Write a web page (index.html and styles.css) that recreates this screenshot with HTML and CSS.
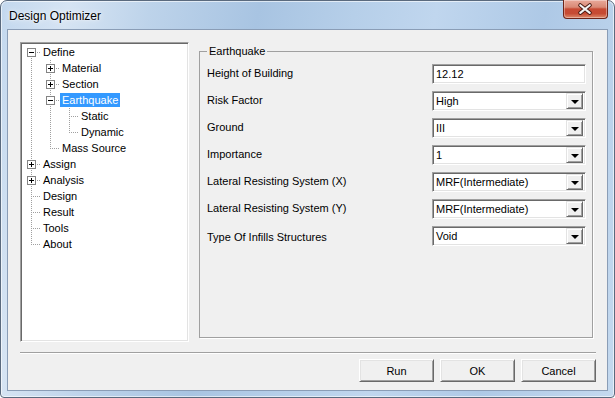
FILE: index.html
```html
<!DOCTYPE html>
<html lang="en">
<head>
  <meta charset="UTF-8">
  <title>Design Optimizer</title>
  <link rel="stylesheet" href="styles.css">
</head>
<body>

<div class="window">
  <div class="titlebar">
    <span class="title">Design Optimizer</span>
    <button class="close" aria-label="Close">
      <svg width="45" height="19" viewBox="0 0 45 19">
        <path d="M17 5 L27 13 M27 5 L17 13" stroke="#4a1a12" stroke-width="4.2" stroke-linecap="round"/>
        <path d="M17 5 L27 13 M27 5 L17 13" stroke="#f4f4f4" stroke-width="2.2" stroke-linecap="round"/>
      </svg>
    </button>
  </div>

  <div class="client">
    <div class="main">
      <div class="tree">
        <div class="node"><span class="cell first"><span class="exp minus"></span></span><span class="label">Define</span></div>
        <div class="node"><span class="cell pipe"></span><span class="cell tee"><span class="exp plus"></span></span><span class="label">Material</span></div>
        <div class="node"><span class="cell pipe"></span><span class="cell tee"><span class="exp plus"></span></span><span class="label">Section</span></div>
        <div class="node"><span class="cell pipe"></span><span class="cell tee"><span class="exp minus"></span></span><span class="label selected">Earthquake</span></div>
        <div class="node"><span class="cell pipe"></span><span class="cell pipe"></span><span class="cell tee"></span><span class="label">Static</span></div>
        <div class="node"><span class="cell pipe"></span><span class="cell pipe"></span><span class="cell end"></span><span class="label">Dynamic</span></div>
        <div class="node"><span class="cell pipe"></span><span class="cell end"></span><span class="label">Mass Source</span></div>
        <div class="node"><span class="cell tee"><span class="exp plus"></span></span><span class="label">Assign</span></div>
        <div class="node"><span class="cell tee"><span class="exp plus"></span></span><span class="label">Analysis</span></div>
        <div class="node"><span class="cell tee"></span><span class="label">Design</span></div>
        <div class="node"><span class="cell tee"></span><span class="label">Result</span></div>
        <div class="node"><span class="cell tee"></span><span class="label">Tools</span></div>
        <div class="node"><span class="cell end"></span><span class="label">About</span></div>
      </div>

      <fieldset class="group">
        <legend>Earthquake</legend>
        <div class="form">
          <label>Height of Building</label>
          <div class="textbox">12.12</div>

          <label>Risk Factor</label>
          <div class="combo"><span class="value">High</span><span class="drop"></span></div>

          <label>Ground</label>
          <div class="combo"><span class="value">III</span><span class="drop"></span></div>

          <label>Importance</label>
          <div class="combo"><span class="value">1</span><span class="drop"></span></div>

          <label>Lateral Resisting System (X)</label>
          <div class="combo"><span class="value">MRF(Intermediate)</span><span class="drop"></span></div>

          <label>Lateral Resisting System (Y)</label>
          <div class="combo"><span class="value">MRF(Intermediate)</span><span class="drop"></span></div>

          <label class="lower">Type Of Infills Structures</label>
          <div class="combo"><span class="value">Void</span><span class="drop"></span></div>
        </div>
      </fieldset>
    </div>

    <div class="separator"></div>

    <div class="buttons">
      <button class="btn">Run</button>
      <button class="btn">OK</button>
      <button class="btn">Cancel</button>
    </div>
  </div>
</div>

</body>
</html>
```

FILE: styles.css
```css
body {
  margin: 0;
  width: 615px;
  height: 398px;
  overflow: hidden;
  background: #fff;
  font-family: "Liberation Sans", Arial, sans-serif;
  font-size: 11px;
  color: #000;
}
.window {
  --v: repeating-linear-gradient(to bottom, #a0a0a0 0 1px, transparent 1px 2px);
  --h: repeating-linear-gradient(to right, #a0a0a0 0 1px, transparent 1px 2px);
  box-sizing: border-box;
  width: 615px;
  height: 398px;
  border: 1px solid #5a6a7e;
  border-radius: 7px 7px 4px 4px;
  background: linear-gradient(100deg, #c3d8ee 0%, #d6e4f3 10%, #bdd3ea 22%, #a8c4e2 38%, #b6cfe9 52%, #c0d6ee 64%, #aec9e6 80%, #c4d9ef 100%);
  box-shadow: inset 0 0 0 1px rgba(255,255,255,0.6);
  display: flex;
  flex-direction: column;
}
.titlebar {
  height: 28px;
  display: flex;
  align-items: flex-start;
  justify-content: space-between;
}
.title {
  font-size: 12px;
  line-height: 14px;
  margin: 8px 0 0 8px;
  text-shadow: 0 0 6px rgba(255,255,255,0.95), 0 0 2px rgba(255,255,255,0.9);
}
.close {
  width: 45px;
  height: 19px;
  margin: -1px 6px 0 0;
  padding: 0;
  border: 1px solid #6d2418;
  border-top: none;
  border-radius: 0 0 4px 4px;
  background: linear-gradient(to bottom, #e9a99a 0%, #d98a76 40%, #c74a33 50%, #c64b33 75%, #dd8a6b 100%);
  box-shadow: inset 0 0 0 1px rgba(255,255,255,0.35);
  display: flex;
}
.close svg { display: block; }
.client {
  flex: 1;
  margin: 0 6px 6px 6px;
  border: 1px solid #8a9db6;
  background: #f0f0f0;
  padding: 12px 11px 8px 12px;
  display: flex;
  flex-direction: column;
}
.main {
  height: 300px;
  display: flex;
  align-items: flex-start;
  gap: 10px;
}

/* tree view */
.tree {
  box-sizing: border-box;
  width: 169px;
  height: 300px;
  background: #fff;
  border: 1px solid;
  border-color: #a0a0a0 #fff #fff #a0a0a0;
  box-shadow: inset 1px 1px 0 #696969, inset -1px -1px 0 #e3e3e3;
  padding: 1px;
}
.node {
  height: 16px;
  display: flex;
  align-items: center;
}
.cell {
  flex: none;
  width: 19px;
  height: 16px;
  display: flex;
  align-items: center;
  justify-content: center;
  background-repeat: no-repeat;
}
.pipe { background-image: var(--v); background-size: 1px 16px; background-position: 9px 0; }
.tee {
  background-image: var(--v), var(--h);
  background-size: 1px 16px, 10px 1px;
  background-position: 9px 0, 9px 8px;
}
.end {
  background-image: var(--v), var(--h);
  background-size: 1px 9px, 10px 1px;
  background-position: 9px 0, 9px 8px;
}
.first {
  background-image: var(--v), var(--h);
  background-size: 1px 8px, 10px 1px;
  background-position: 9px 8px, 9px 8px;
}
.exp {
  box-sizing: border-box;
  width: 9px;
  height: 9px;
  border: 1px solid #848484;
  background: #fff;
}
.minus {
  background: linear-gradient(#000, #000) center / 5px 1px no-repeat, #fff;
}
.plus {
  background: linear-gradient(#000, #000) center / 5px 1px no-repeat,
              linear-gradient(#000, #000) center / 1px 5px no-repeat, #fff;
}
.label {
  height: 14px;
  line-height: 14px;
  padding: 0 2px;
  white-space: nowrap;
}
.selected {
  background: #3399ff;
  color: #fff;
}

/* group box */
.group {
  box-sizing: border-box;
  width: 394px;
  height: 293px;
  margin: 3px 0 0 0;
  padding: 6px 7px 0 7px;
  border: 1px solid #a0a0a0;
  box-shadow: 1px 1px 0 #fff;
  min-width: 0;
}
.group legend {
  padding: 0 2px;
  line-height: 13px;
}
.form {
  display: grid;
  grid-template-columns: 225px 154px;
  grid-auto-rows: 20px;
  row-gap: 7px;
  align-items: center;
}
.form label {
  line-height: 14px;
  margin-top: -2px;
}
.form label.lower { margin-top: 2px; }
.textbox, .combo {
  box-sizing: border-box;
  height: 20px;
  background: #fff;
  border: 1px solid;
  border-color: #a0a0a0 #fff #fff #a0a0a0;
  box-shadow: inset 1px 1px 0 #696969, inset -1px -1px 0 #e3e3e3;
  padding: 2px 2px 2px 3px;
  line-height: 15px;
  white-space: nowrap;
}
.combo {
  display: flex;
  justify-content: space-between;
  padding-right: 2px;
  padding-bottom: 2px;
}
.drop {
  box-sizing: border-box;
  width: 17px;
  height: 16px;
  margin-top: -1px;
  background: #f0f0f0;
  border: 1px solid;
  border-color: #e3e3e3 #696969 #696969 #e3e3e3;
  box-shadow: inset 1px 1px 0 #fff, inset -1px -1px 0 #a0a0a0;
  display: flex;
  align-items: center;
  justify-content: center;
}
.drop::before {
  content: "";
  margin-top: 2px;
  border-left: 4px solid transparent;
  border-right: 4px solid transparent;
  border-top: 4px solid #000;
}

/* bottom */
.separator {
  margin-top: 10px;
  border-top: 1px solid #a0a0a0;
  border-bottom: 1px solid #fff;
}
.buttons {
  margin-top: 5px;
  display: flex;
  justify-content: flex-end;
  gap: 6px;
}
.btn {
  box-sizing: border-box;
  width: 75px;
  height: 23px;
  padding: 0;
  font-family: inherit;
  font-size: 11px;
  color: #000;
  background: #f0f0f0;
  border: 1px solid;
  border-color: #fff #696969 #696969 #fff;
  box-shadow: inset 1px 1px 0 #e3e3e3, inset -1px -1px 0 #a0a0a0;
}
```
